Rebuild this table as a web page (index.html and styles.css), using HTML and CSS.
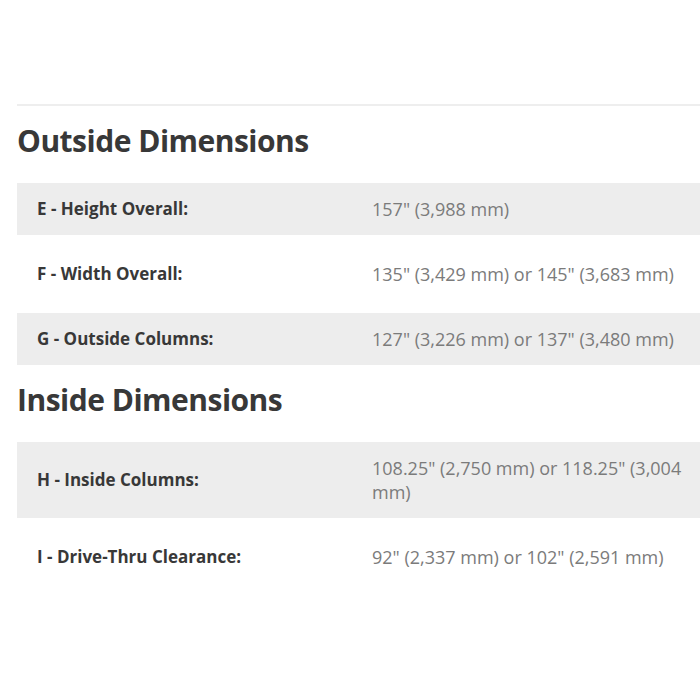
FILE: index.html
```html
<!DOCTYPE html>
<html>
<head>
<meta charset="utf-8">
<link rel="stylesheet" href="styles.css">
</head>
<body>
<div class="page">
  <div class="rule"></div>
  <h2 class="title">Outside Dimensions</h2>
  <div class="specs">
    <div class="row shade"><div class="label">E - Height Overall:</div><div class="value">157" (3,988 mm)</div></div>
    <div class="row"><div class="label">F - Width Overall:</div><div class="value">135" (3,429 mm) or 145" (3,683 mm)</div></div>
    <div class="row shade"><div class="label">G - Outside Columns:</div><div class="value">127" (3,226 mm) or 137" (3,480 mm)</div></div>
  </div>
  <h2 class="title">Inside Dimensions</h2>
  <div class="specs">
    <div class="row shade"><div class="label">H - Inside Columns:</div><div class="value">108.25" (2,750 mm) or 118.25" (3,004 mm)</div></div>
    <div class="row"><div class="label">I - Drive-Thru Clearance:</div><div class="value">92" (2,337 mm) or 102" (2,591 mm)</div></div>
  </div>
</div>
</body>
</html>
```
FILE: styles.css
```css
html, body {
  margin: 0;
  padding: 0;
  background: #ffffff;
}
body {
  font-family: "Open Sans", "Liberation Sans", sans-serif;
}
.page {
  padding: 104px 0 0 17px;
}
.rule {
  height: 2px;
  background: #eeeeee;
}
.title {
  margin: 15px 0 22px;
  font-size: 30px;
  line-height: 40px;
  font-weight: 700;
  color: #383838;
  letter-spacing: -0.5px;
}
.specs {
  display: flex;
  flex-direction: column;
  gap: 13px;
}
.row {
  display: flex;
  align-items: center;
  padding: 14px 0;
}
.shade {
  background: #ededed;
}
.label {
  flex: 0 0 auto;
  width: 335px;
  padding-left: 20px;
  font-size: 17px;
  line-height: 24px;
  font-weight: 700;
  color: #383838;
}
.value {
  flex: 1 1 auto;
  padding-right: 8px;
  font-size: 18px;
  line-height: 24px;
  font-weight: 400;
  color: #7b7b7b;
}
```
